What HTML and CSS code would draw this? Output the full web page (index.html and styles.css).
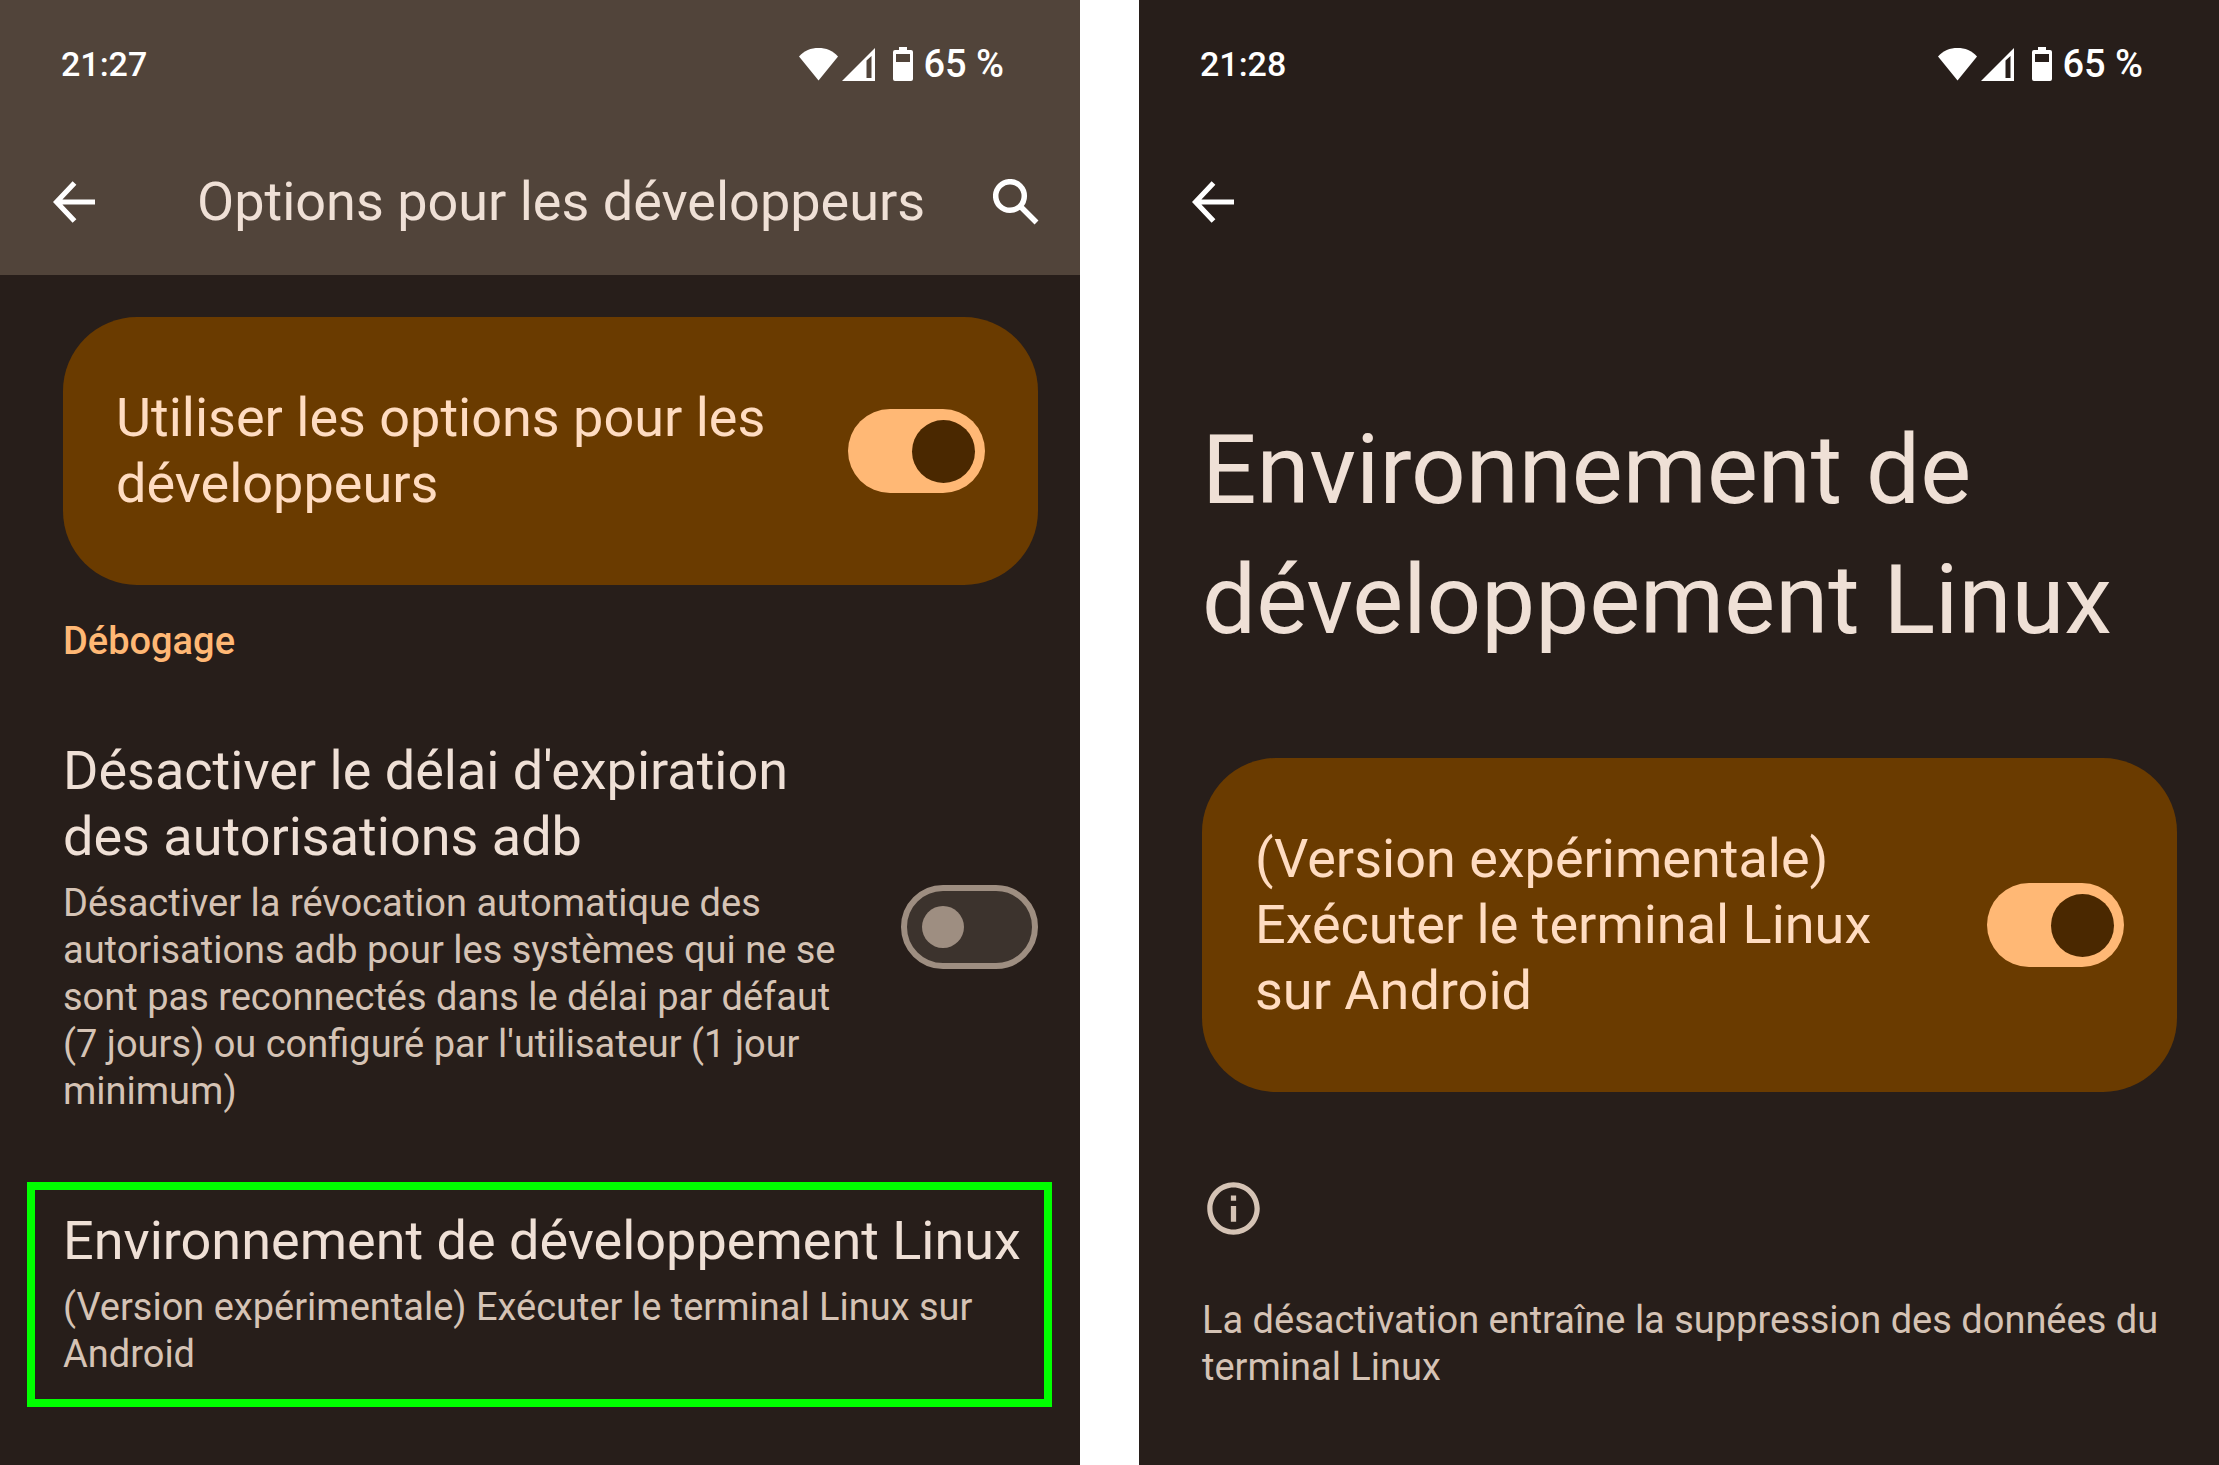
FILE: index.html
```
<!DOCTYPE html>
<html lang="fr">
<head>
  <meta charset="utf-8">
  <title>Options pour les développeurs</title>
  <meta name="viewport" content="width=device-width, initial-scale=1">
  <link rel="stylesheet" href="styles.css">
</head>
<body>
  <!-- shared status bar icons -->
  <svg class="sprite" aria-hidden="true">
    <symbol id="wifi" viewBox="0 0 39 34">
      <path d="M0 9.500C5 3.500 12 1 19.500 1S34 3.500 39 9.500L19.500 33.500z"/>
    </symbol>
    <symbol id="signal" viewBox="0 0 33 34">
      <path fill-rule="evenodd" d="M0 34L33 1V34zM24.500 13.500V31H29.500V9z"/>
    </symbol>
    <symbol id="battery" viewBox="0 0 20 34">
      <path fill-rule="evenodd" d="M6 0H14V3H18Q20 3 20 5V32Q20 34 18 34H2Q0 34 0 32V5Q0 3 2 3H6zM3 7V15H17V7z"/>
    </symbol>
    <symbol id="back" viewBox="0 0 42 42">
      <path fill="none" stroke="currentColor" stroke-width="5.200" d="M21.500 2L3.500 21L21.500 40M3.500 21H42"/>
    </symbol>
  </svg>

  <main class="screens">
    <section class="screen">
      <header class="top-bar raised">
        <div class="status-bar">
          <span>21:27</span>
          <div class="status-icons">
            <svg width="39" height="34"><use href="#wifi"/></svg>
            <svg width="33" height="34"><use href="#signal"/></svg>
            <svg class="battery" width="20" height="34"><use href="#battery"/></svg>
            <span>65 %</span>
          </div>
        </div>
        <div class="app-bar">
          <button class="icon-button" aria-label="Retour">
            <svg width="42" height="42"><use href="#back"/></svg>
          </button>
          <h1 class="app-title">Options pour les développeurs</h1>
          <button class="icon-button" aria-label="Rechercher">
            <svg width="46" height="46" viewBox="0 0 46 46" fill="none" stroke="currentColor" stroke-width="5.500">
              <circle cx="17" cy="17" r="14.300"/>
              <path d="M27 27L43.500 43.500"/>
            </svg>
          </button>
        </div>
      </header>

      <div class="content">
        <div class="card">
          <label class="card-label" for="dev-options">Utiliser les options pour les développeurs</label>
          <input class="switch" type="checkbox" role="switch" id="dev-options" checked>
        </div>

        <h2 class="category">Débogage</h2>

        <div class="preference">
          <label class="preference-text" for="adb-timeout">
            <span class="preference-title">Désactiver le délai d'expiration des autorisations adb</span>
            <span class="preference-summary">Désactiver la révocation automatique des autorisations adb pour les systèmes qui ne se sont pas reconnectés dans le délai par défaut (7 jours) ou configuré par l'utilisateur (1 jour minimum)</span>
          </label>
          <input class="switch" type="checkbox" role="switch" id="adb-timeout">
        </div>

        <a class="preference-link" href="#linux">
          <span class="preference-title">Environnement de développement Linux</span>
          <span class="preference-summary">(Version expérimentale) Exécuter le terminal Linux sur Android</span>
        </a>
      </div>
    </section>

    <section class="screen" id="linux">
      <header class="top-bar">
        <div class="status-bar">
          <span>21:28</span>
          <div class="status-icons">
            <svg width="39" height="34"><use href="#wifi"/></svg>
            <svg width="33" height="34"><use href="#signal"/></svg>
            <svg class="battery" width="20" height="34"><use href="#battery"/></svg>
            <span>65 %</span>
          </div>
        </div>
        <div class="app-bar">
          <button class="icon-button" aria-label="Retour">
            <svg width="42" height="42"><use href="#back"/></svg>
          </button>
        </div>
      </header>

      <div class="content">
        <h1 class="page-title">Environnement de développement Linux</h1>

        <div class="card">
          <label class="card-label" for="linux-terminal">(Version expérimentale) Exécuter le terminal Linux sur Android</label>
          <input class="switch" type="checkbox" role="switch" id="linux-terminal" checked>
        </div>

        <div class="footnote">
          <svg width="63" height="63" viewBox="0 0 24 24" fill="currentColor" aria-hidden="true">
            <path d="M11 7h2v2h-2zm0 4h2v6h-2zm1-9C6.480 2 2 6.480 2 12s4.480 10 10 10 10-4.480 10-10S17.520 2 12 2zm0 18c-4.410 0-8-3.590-8-8s3.590-8 8-8 8 3.590 8 8-3.590 8-8 8z"/>
          </svg>
          <p>La désactivation entraîne la suppression des données du terminal Linux</p>
        </div>
      </div>
    </section>
  </main>
</body>
</html>
```
FILE: styles.css
```
* {
  box-sizing: border-box;
}
body {
  margin: 0;
  background-color: white;
  font-family: Roboto, sans-serif;
  color: #efe0d6;
}
h1, h2, p {
  margin: 0;
  font-weight: 400;
}
svg {
  display: block;
}
.sprite {
  position: absolute;
  width: 0;
  height: 0;
}
.screens {
  display: grid;
  grid-template-columns: 1fr 1fr;
  gap: 59px;
  min-height: 100vh;
}
.screen {
  background-color: #271e1a;
}

/* status bar and app bar */
.top-bar {
  padding: 44px 41px 40px 53px;
  color: white;
}
.raised {
  background-color: #51443a;
}
.status-bar {
  display: flex;
  justify-content: space-between;
  padding: 0 35px 0 8px;
  font-size: 34px;
  font-weight: 500;
  line-height: 40px;
}
.status-icons {
  display: flex;
  align-items: center;
  gap: 4px;
  font-size: 38px;
  fill: currentColor;
}
.battery {
  margin: 0 6px 0 14px;
}
.app-bar {
  display: flex;
  align-items: center;
  min-height: 66px;
  margin-top: 85px;
}
.icon-button {
  padding: 0;
  border: 0;
  background: none;
  color: inherit;
  cursor: pointer;
}
.app-title {
  flex: 1;
  margin-left: 102px;
  font-size: 54px;
  line-height: 66px;
  color: #efe0d6;
}

.content {
  padding: 42px 42px 42px 63px;
}
.page-title {
  margin: 88px 0 93px;
  font-size: 96px;
  line-height: 130px;
}
.card {
  display: flex;
  align-items: center;
  justify-content: space-between;
  gap: 63px;
  padding: 68px 53px;
  border-radius: 74px;
  background-color: #6a3b00;
}
.card-label {
  font-size: 54px;
  line-height: 66px;
  color: #ffdcc1;
}
.category {
  margin: 33px 0 73px;
  font-size: 38px;
  font-weight: 500;
  line-height: 47px;
  color: #ffb875;
}

.preference {
  display: flex;
  align-items: center;
  gap: 63px;
}
.preference-text {
  flex: 1;
}
.preference-title,
.preference-summary {
  display: block;
}
.preference-title {
  font-size: 54px;
  line-height: 66px;
}
.preference-summary {
  margin-top: 10px;
  font-size: 38px;
  line-height: 47px;
  color: #d5c3b5;
}
.preference-link {
  display: block;
  margin: 67px -14px 0 -36px;
  padding: 18px 0 21px 28px;
  border: 8px solid #00ff00;
  color: inherit;
  text-decoration: none;
}

.switch {
  display: flex;
  align-items: center;
  flex-shrink: 0;
  appearance: none;
  width: 137px;
  height: 84px;
  margin: 0;
  padding: 0 15px;
  border: 6px solid #9e8e81;
  border-radius: 42px;
  background-color: #3c332d;
  cursor: pointer;
}
.switch::before {
  content: "";
  width: 42px;
  height: 42px;
  border-radius: 50%;
  background-color: #9e8e81;
}
.switch:checked {
  justify-content: flex-end;
  padding: 0 10px;
  border: 0;
  background-color: #ffb875;
}
.switch:checked::before {
  width: 63px;
  height: 63px;
  background-color: #4a2800;
}

.footnote {
  margin-top: 85px;
  font-size: 38px;
  line-height: 47px;
  color: #d5c3b5;
}
.footnote p {
  margin-top: 57px;
}
```
